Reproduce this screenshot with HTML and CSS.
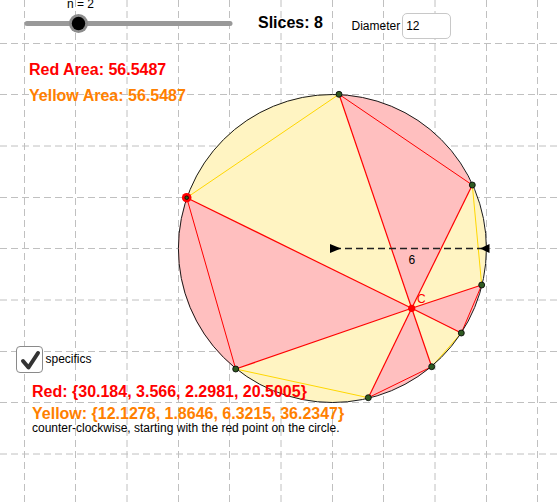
FILE: index.html
```html
<!DOCTYPE html>
<html lang="en">
<head>
<meta charset="utf-8">
<title>Pizza theorem</title>
<link rel="stylesheet" href="styles.css">
</head>
<body>
<div class="applet">
  <svg class="board" width="559" height="503" viewBox="0 0 559 503">
    <g class="grid">
      <line x1="24.5" y1="0" x2="24.5" y2="503"/>
      <line x1="75.5" y1="0" x2="75.5" y2="503"/>
      <line x1="127" y1="0" x2="127" y2="503"/>
      <line x1="178.5" y1="0" x2="178.5" y2="503"/>
      <line x1="229.5" y1="0" x2="229.5" y2="503"/>
      <line x1="281" y1="0" x2="281" y2="503"/>
      <line x1="332.5" y1="0" x2="332.5" y2="503"/>
      <line x1="383.5" y1="0" x2="383.5" y2="503"/>
      <line x1="435" y1="0" x2="435" y2="503"/>
      <line x1="486.5" y1="0" x2="486.5" y2="503"/>
      <line x1="537.5" y1="0" x2="537.5" y2="503"/>
      <line x1="0" y1="43.5" x2="559" y2="43.5"/>
      <line x1="0" y1="94.5" x2="559" y2="94.5"/>
      <line x1="0" y1="146" x2="559" y2="146"/>
      <line x1="0" y1="197.5" x2="559" y2="197.5"/>
      <line x1="0" y1="248.5" x2="559" y2="248.5"/>
      <line x1="0" y1="300" x2="559" y2="300"/>
      <line x1="0" y1="351.5" x2="559" y2="351.5"/>
      <line x1="0" y1="402.5" x2="559" y2="402.5"/>
      <line x1="0" y1="454" x2="559" y2="454"/>
    </g>

    <g class="slider">
      <line class="track" x1="27" y1="23.5" x2="230" y2="23.5"/>
      <circle class="knob-ring" cx="78.5" cy="23.5" r="9.5"/>
      <circle class="knob" cx="78.5" cy="23.5" r="6.7"/>
      <text class="slider-label" x="67" y="8">n = 2</text>
    </g>

    <g class="slices">
      <path class="pink" d="M411.7 308.3 L186.7 197.7 A154 154 0 0 0 235.7 369 Z"/>
      <path class="yellow" d="M411.7 308.3 L235.7 369 A154 154 0 0 0 368.3 397.7 Z"/>
      <path class="pink" d="M411.7 308.3 L368.3 397.7 A154 154 0 0 0 431.7 366.7 Z"/>
      <path class="yellow" d="M411.7 308.3 L431.7 366.7 A154 154 0 0 0 461.3 333 Z"/>
      <path class="pink" d="M411.7 308.3 L461.3 333 A154 154 0 0 0 481.7 285 Z"/>
      <path class="yellow" d="M411.7 308.3 L481.7 285 A154 154 0 0 0 472.3 185 Z"/>
      <path class="pink" d="M411.7 308.3 L472.3 185 A154 154 0 0 0 339 94.3 Z"/>
      <path class="yellow" d="M411.7 308.3 L339 94.3 A154 154 0 0 0 186.7 197.7 Z"/>
    </g>

    <g class="chords">
      <line class="chord-red" x1="186.7" y1="197.7" x2="235.7" y2="369"/>
      <line class="chord-gold" x1="235.7" y1="369" x2="368.3" y2="397.7"/>
      <line class="chord-red" x1="368.3" y1="397.7" x2="431.7" y2="366.7"/>
      <line class="chord-gold" x1="431.7" y1="366.7" x2="461.3" y2="333"/>
      <line class="chord-red" x1="461.3" y1="333" x2="481.7" y2="285"/>
      <line class="chord-gold" x1="481.7" y1="285" x2="472.3" y2="185"/>
      <line class="chord-red" x1="472.3" y1="185" x2="339" y2="94.3"/>
      <line class="chord-gold" x1="339" y1="94.3" x2="186.7" y2="197.7"/>
    </g>

    <circle class="rim" cx="332.4" cy="248.5" r="154"/>

    <g class="spokes">
      <line x1="411.7" y1="308.3" x2="186.7" y2="197.7"/>
      <line x1="411.7" y1="308.3" x2="235.7" y2="369"/>
      <line x1="411.7" y1="308.3" x2="368.3" y2="397.7"/>
      <line x1="411.7" y1="308.3" x2="431.7" y2="366.7"/>
      <line x1="411.7" y1="308.3" x2="461.3" y2="333"/>
      <line x1="411.7" y1="308.3" x2="481.7" y2="285"/>
      <line x1="411.7" y1="308.3" x2="472.3" y2="185"/>
      <line x1="411.7" y1="308.3" x2="339" y2="94.3"/>
    </g>

    <g class="radius">
      <line class="radius-line" x1="334" y1="248.5" x2="482" y2="248.5"/>
      <polygon class="arrowhead" points="330,244 330,253 341,248.5"/>
      <polygon class="arrowhead" points="489.5,244 489.5,253 480,248.5"/>
      <text class="measure" x="408.5" y="264">6</text>
    </g>

    <g class="points">
      <circle class="red-point" cx="186.7" cy="197.7" r="4.8"/>
      <circle class="dot" cx="186.7" cy="197.7" r="1.8"/>
      <circle class="dot" cx="235.7" cy="369" r="3"/>
      <circle class="dot" cx="368.3" cy="397.7" r="3"/>
      <circle class="dot" cx="431.7" cy="366.7" r="3"/>
      <circle class="dot" cx="461.3" cy="333" r="3"/>
      <circle class="dot" cx="481.7" cy="285" r="3"/>
      <circle class="dot" cx="472.3" cy="185" r="3"/>
      <circle class="dot" cx="339" cy="94.3" r="3"/>
      <circle class="center-point" cx="411.7" cy="308.3" r="3.6"/>
      <text class="point-label" x="417" y="303">C</text>
    </g>
  </svg>

  <div class="label big red area-red">Red Area: 56.5487</div>
  <div class="label big orange area-yellow">Yellow Area: 56.5487</div>
  <div class="label big slices-count">Slices: 8</div>
  <div class="diameter">
    <span class="diameter-caption">Diameter</span>
    <span class="diameter-input">12</span>
  </div>

  <div class="specifics">
    <span class="checkbox">
      <svg width="25" height="25" viewBox="0 0 25 25"><polyline points="6,14 11.5,20.5 21,6" /></svg>
    </span>
    <span class="specifics-label">specifics</span>
  </div>

  <div class="lists">
    <div class="label big red">Red: {30.184, 3.566, 2.2981, 20.5005}</div>
    <div class="label big orange">Yellow: {12.1278, 1.8646, 6.3215, 36.2347}</div>
    <div class="label small">counter-clockwise, starting with the red point on the circle.</div>
  </div>
</div>
</body>
</html>
```

FILE: styles.css
```css
html, body {
  margin: 0;
  padding: 0;
  background: #ffffff;
}

.applet {
  position: relative;
  width: 559px;
  height: 503px;
  overflow: hidden;
  background: #ffffff;
  font-family: "Liberation Sans", Arial, sans-serif;
  color: #000000;
}

.board {
  position: absolute;
  left: 0;
  top: 0;
  display: block;
}

.grid line {
  stroke: #c0c0c0;
  stroke-width: 1;
  stroke-dasharray: 7 4;
}

.track {
  stroke: #999999;
  stroke-width: 5;
  stroke-linecap: round;
}

.knob-ring {
  fill: #8c8c8c;
}

.knob {
  fill: #000000;
}

.slider-label,
.measure {
  font-family: "Liberation Sans", Arial, sans-serif;
  font-size: 12px;
  fill: #000000;
}

.point-label {
  font-family: "Liberation Sans", Arial, sans-serif;
  font-size: 12px;
  fill: #ff0000;
}

.pink {
  fill: #ffbfbf;
}

.yellow {
  fill: #fff4c2;
}

.chord-red {
  stroke: #ff0000;
  stroke-width: 1;
}

.chord-gold {
  stroke: #ffd700;
  stroke-width: 1;
}

.rim {
  fill: none;
  stroke: #1a1a1a;
  stroke-width: 1;
}

.spokes line {
  stroke: #ff0000;
  stroke-width: 1.2;
}

.radius-line {
  stroke: #222222;
  stroke-width: 1.3;
  stroke-dasharray: 7 4;
}

.arrowhead {
  fill: #000000;
}

.red-point {
  fill: #ff0000;
}

.dot {
  fill: #2f5a22;
  stroke: #000000;
  stroke-width: 0.8;
}

.center-point {
  fill: #ff0000;
}

.label {
  position: absolute;
  white-space: nowrap;
  line-height: 16px;
}

.big {
  font-size: 16px;
  font-weight: bold;
}

.small {
  font-size: 12px;
  line-height: 12px;
}

.red {
  color: #ff0000;
}

.orange {
  color: #ff8000;
}

.area-red {
  left: 29px;
  top: 61.5px;
}

.area-yellow {
  left: 29px;
  top: 88px;
}

.slices-count {
  left: 258px;
  top: 15px;
}

.diameter {
  position: absolute;
  left: 351.5px;
  top: 13px;
  display: flex;
  align-items: center;
  gap: 2px;
  font-size: 12px;
}

.diameter-input {
  box-sizing: border-box;
  width: 49px;
  height: 26px;
  padding: 0 3px;
  border: 1px solid #c8c8c8;
  border-radius: 5px;
  line-height: 24px;
  background: #ffffff;
}

.specifics {
  position: absolute;
  left: 15.5px;
  top: 345.5px;
  display: flex;
  align-items: center;
  gap: 3px;
  font-size: 12px;
}

.checkbox {
  box-sizing: border-box;
  width: 27px;
  height: 27px;
  border: 1.3px solid #8a8a8a;
  border-radius: 4px;
  background: #ffffff;
  display: flex;
  align-items: center;
  justify-content: center;
}

.checkbox polyline {
  fill: none;
  stroke: #333333;
  stroke-width: 4;
  stroke-linecap: round;
  stroke-linejoin: round;
}

.specifics-label {
  margin-top: -1px;
}

.lists {
  position: absolute;
  left: 32px;
  top: 384px;
  display: flex;
  flex-direction: column;
  gap: 6px;
}

.lists .label {
  position: static;
}

.lists .small {
  margin-top: -6px;
}
```
